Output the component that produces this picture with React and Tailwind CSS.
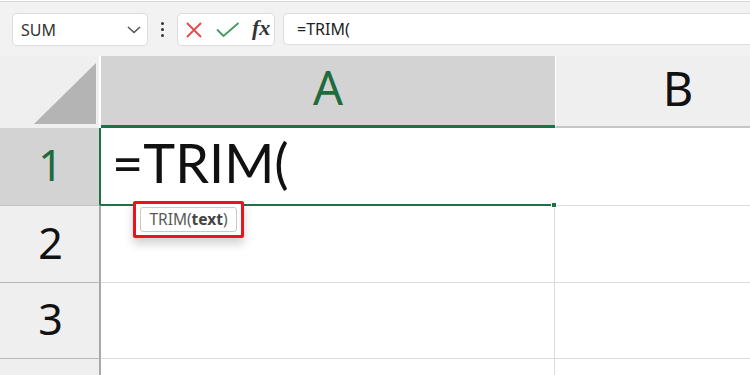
import React from "react";

const headerFont = { fontFamily: '"Noto Sans", "Open Sans", sans-serif' };

const NameBox = () => (
  <div className="w-[136px] h-[33px] bg-white border border-[#dcdcdc] rounded-[5px] flex items-center justify-between pl-[8px] pr-[5px]">
    <span className="text-[16px] text-[#333] leading-none" style={headerFont}>
      SUM
    </span>
    <svg width="16" height="10" viewBox="0 0 16 10">
      <path d="M2 2 L8 7.5 L14 2" fill="none" stroke="#555" strokeWidth="1.6" />
    </svg>
  </div>
);

const FormulaButtons = () => (
  <div className="w-[98px] h-[33px] bg-white border border-[#dcdcdc] rounded-[5px] flex items-center pl-[8px] gap-[14px]">
    <svg width="16" height="16" viewBox="0 0 16 16">
      <path d="M1 1 L15 15 M15 1 L1 15" stroke="#e14b4b" strokeWidth="1.8" />
    </svg>
    <svg width="24" height="16" viewBox="0 0 24 16">
      <path d="M1 7.5 L7.5 14 L22.5 1" fill="none" stroke="#3f9b5d" strokeWidth="1.8" />
    </svg>
    <span
      className="text-[22px] italic font-bold text-[#333] leading-none -mt-[4px] -ml-[2px]"
      style={{ fontFamily: '"Liberation Serif", serif' }}
    >
      fx
    </span>
  </div>
);

const Toolbar = () => (
  <div className="h-[55px] bg-[#f2f2f2] border-t border-[#d8d8d8] mt-[1px] flex items-start pt-[11px] pl-[12px]">
    <NameBox />
    <div className="w-[29px] h-[33px] flex flex-col items-center justify-center gap-[3px]">
      <span className="w-[3px] h-[3px] rounded-full bg-[#333]" />
      <span className="w-[3px] h-[3px] rounded-full bg-[#333]" />
      <span className="w-[3px] h-[3px] rounded-full bg-[#333]" />
    </div>
    <FormulaButtons />
    <div className="ml-[8px] flex-1 h-[32px] bg-white border border-r-0 border-[#dcdcdc] rounded-l-[5px] flex items-center pl-[13px]">
      <span className="text-[16px] text-[#222]" style={headerFont}>
        =TRIM(
      </span>
    </div>
  </div>
);

const RowHead = ({ n, active }) => (
  <div
    className={`flex items-center justify-center border-b border-r-2 ${
      active
        ? "bg-[#d3d3d3] text-[#1e6b3c] border-b-[#c2c2c2] border-r-[#1e7145]"
        : "bg-[#efefef] text-[#111] border-b-[#b9b9b9] border-r-[#a8a8a8]"
    }`}
  >
    <span className="text-[43px] leading-none pb-[4px] pl-[2px]" style={headerFont}>
      {n}
    </span>
  </div>
);

const Cell = ({ last }) => (
  <div className={`bg-white border-b border-[#dcdcdc] ${last ? "" : "border-r"}`} />
);

export default function App() {
  return (
    <div className="w-[750px] h-[375px] overflow-hidden bg-white relative">
      <Toolbar />

      <div className="grid grid-cols-[101px_454px_195px] grid-rows-[72px_78px_77px_76px_20px]">
        {/* header row */}
        <div className="bg-[#efefef] border-r-2 border-white flex items-end justify-end pr-[3px] pb-[4px]">
          <svg width="62" height="61" viewBox="0 0 62 61">
            <path d="M0 61 L62 61 L62 0 Z" fill="#b4b4b4" />
          </svg>
        </div>
        <div className="bg-[#d3d3d3] border-b-[3px] border-[#1e7145] flex items-center justify-center">
          <span className="text-[47px] leading-none text-[#1e6b3c] pb-[6px]" style={headerFont}>
            A
          </span>
        </div>
        <div className="bg-[#efefef] border-l border-b-2 border-l-white border-b-[#c6c6c6] flex items-center justify-center">
          <span className="text-[47px] leading-none text-[#111] pb-[6px] pl-[50px]" style={headerFont}>
            B
          </span>
        </div>

        {/* row 1 */}
        <RowHead n="1" active />
        <div className="bg-white border-b-2 border-[#1e7145] flex items-center pl-[11px] relative">
          <span
            className="text-[54px] leading-none text-[#111] pb-[6px]"
            style={{ fontFamily: 'Lato, "Open Sans", sans-serif' }}
          >
            =TRIM(
          </span>
          <span className="absolute right-[-2px] bottom-[-4px] w-[6px] h-[6px] bg-[#1e7145] border border-white" />
        </div>
        <div className="bg-white border-b border-[#dcdcdc]" />

        {/* row 2 */}
        <RowHead n="2" />
        <Cell />
        <Cell last />

        {/* row 3 */}
        <RowHead n="3" />
        <Cell />
        <Cell last />

        {/* row 4 */}
        <div className="bg-[#efefef] border-r-2 border-[#a8a8a8]" />
        <Cell />
        <Cell last />
      </div>

      {/* function tooltip */}
      <div className="absolute left-[133px] top-[201px] w-[111px] h-[37px] border-[3px] border-[#e8151c] rounded-[2px] bg-white shadow-[0_6px_10px_rgba(0,0,0,0.18)] pl-[4px] pt-[3px]">
        <div className="w-[97px] h-[25px] border border-[#c9c9c9] rounded-[3px] flex items-center justify-center">
          <span className="text-[15.5px] text-[#5a5a5a] leading-none" style={headerFont}>
            TRIM(<b className="font-bold text-[#444]">text</b>)
          </span>
        </div>
      </div>
    </div>
  );
}
